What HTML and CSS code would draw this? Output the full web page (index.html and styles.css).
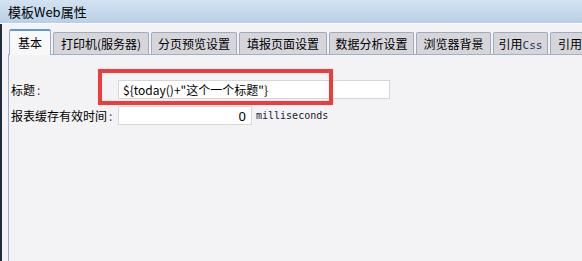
FILE: index.html
```html
<!DOCTYPE html>
<html>
<head>
<meta charset="utf-8">
<link rel="stylesheet" href="styles.css">
</head>
<body>
<div class="window">
  <div class="titlebar">模板Web属性</div>
  <div class="tabstrip">
    <div class="tab active w1">基本</div>
    <div class="tab w2">打印机(服务器)</div>
    <div class="tab w3">分页预览设置</div>
    <div class="tab w4">填报页面设置</div>
    <div class="tab w5">数据分析设置</div>
    <div class="tab w6">浏览器背景</div>
    <div class="tab w7">引用<span class="latin">Css</span></div>
    <div class="tab w8">引用<span class="latin">Js</span></div>
  </div>
  <div class="panel">
    <div class="form">
      <div class="label">标题<span class="colon">:</span></div>
      <div class="field wide">${today()+"这个一个标题"}</div>
      <div class="label">报表缓存有效时间<span class="colon">:</span></div>
      <div class="row2">
        <div class="field num">0</div>
        <span class="unit">milliseconds</span>
      </div>
    </div>
    <div class="highlight"></div>
  </div>
</div>
</body>
</html>
```

FILE: styles.css
```css
html, body {
  margin: 0;
  padding: 0;
}
body {
  width: 582px;
  height: 261px;
  overflow: hidden;
  background: #f3f3f5;
  font-family: "Noto Sans CJK SC", "Noto Sans", sans-serif;
  font-size: 12px;
  color: #000;
}
.window {
  height: 261px;
  display: flex;
  flex-direction: column;
  box-sizing: border-box;
  border-left: 2px solid #1d2b3d;
  position: relative;
}
.titlebar {
  height: 23px;
  line-height: 23px;
  padding-left: 6px;
  font-size: 13px;
  background: linear-gradient(#d3e2f2, #b9cfe7);
  border-bottom: 1px solid #fdfdfe;
  margin-left: -2px;
  padding-left: 8px;
}
.tabstrip {
  display: flex;
  align-items: flex-end;
  height: 30px;
  padding-left: 7px;
  box-sizing: border-box;
  white-space: nowrap;
}
.tab {
  height: 22px;
  line-height: 21px;
  box-sizing: border-box;
  border: 1px solid #9eabbf;
  border-bottom: none;
  background: #d5d5da;
  margin-right: 2px;
  text-align: center;
  border-radius: 2px 2px 0 0;
  overflow: hidden;
  flex: none;
}
.tab.active {
  height: 26px;
  line-height: 24px;
  background: #f8f8f9;
  border-top: 2px solid #5f9ad8;
  margin-bottom: -1px;
  position: relative;
  z-index: 1;
}
.w1 { width: 42px; }
.w2 { width: 96px; }
.w3 { width: 86px; }
.w4 { width: 88px; }
.w5 { width: 85px; }
.w6 { width: 75px; }
.w7 { width: 55px; }
.w8 { width: 60px; text-align: left; padding-left: 7px; }
.latin {
  font-family: "DejaVu Sans Mono", monospace;
  font-size: 11px;
  color: #1c3658;
}
.panel {
  flex: 1;
  margin-left: 6px;
  border-left: 1px solid #9fb0c8;
  border-top: 1px solid #9fb0c8;
  position: relative;
}
.form {
  display: grid;
  grid-template-columns: 107px auto;
  row-gap: 7px;
  padding: 25px 0 0 2px;
  align-items: center;
}
.label {
  font-size: 12px;
  height: 19px;
  line-height: 19px;
}
.colon {
  color: #7a2a7a;
  margin-left: 2px;
}
.field {
  height: 19px;
  line-height: 18px;
  box-sizing: border-box;
  border: 1px solid #d6d6da;
  background: #fff;
  font-size: 12px;
}
.field.wide {
  width: 272px;
  padding-left: 4px;
}
.row2 {
  display: flex;
  align-items: center;
  gap: 4px;
}
.field.num {
  width: 134px;
  text-align: right;
  padding-right: 5px;
  font-family: "Noto Sans", sans-serif;
  font-size: 13px;
}
.unit {
  font-family: "DejaVu Sans Mono", monospace;
  font-size: 10px;
  color: #1a1a30;
}
.highlight {
  position: absolute;
  left: 89px;
  top: 14px;
  width: 235px;
  height: 36px;
  box-sizing: border-box;
  border: 4px solid #f03b3b;
}
```
